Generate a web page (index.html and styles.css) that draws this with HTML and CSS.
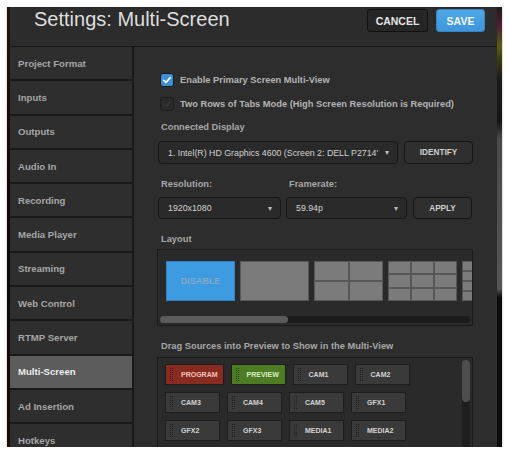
FILE: index.html
```html
<!DOCTYPE html>
<html lang="en">
<head>
    <meta charset="UTF-8">
    <meta name="viewport" content="width=device-width, initial-scale=1.0">
    <title>Settings: Multi-Screen</title>
    <link rel="stylesheet" href="styles.css">
</head>
<body>
    <div class="frame">
        <div class="edge edge-left"></div>
        <div class="app">
            <header class="top">
                <h1>Settings: Multi-Screen</h1>
                <div class="actions">
                    <button class="btn cancel">CANCEL</button>
                    <button class="btn save">SAVE</button>
                </div>
            </header>
            <div class="body">
                <ul class="menu">
                    <li>Project Format</li>
                    <li>Inputs</li>
                    <li>Outputs</li>
                    <li>Audio In</li>
                    <li>Recording</li>
                    <li>Media Player</li>
                    <li>Streaming</li>
                    <li>Web Control</li>
                    <li>RTMP Server</li>
                    <li class="active">Multi-Screen</li>
                    <li>Ad Insertion</li>
                    <li>Hotkeys</li>
                </ul>
                <main class="panel">
                    <div class="check-row first">
                        <span class="box on">
                            <svg width="14" height="14" viewBox="0 0 14 14"><path d="M3.2 7.4 L5.8 9.9 L10.8 4.2" fill="none" stroke="#fff" stroke-width="2" stroke-linecap="round" stroke-linejoin="round"/></svg>
                        </span>
                        <span class="check-label">Enable Primary Screen Multi-View</span>
                    </div>
                    <div class="check-row">
                        <span class="box">
                            <svg width="14" height="14" viewBox="0 0 14 14"><path d="M3.2 7.4 L5.8 9.9 L10.8 4.2" fill="none" stroke="#363636" stroke-width="2" stroke-linecap="round" stroke-linejoin="round"/></svg>
                        </span>
                        <span class="check-label">Two Rows of Tabs Mode (High Screen Resolution is Required)</span>
                    </div>

                    <div class="label display-label">Connected Display</div>
                    <div class="control-row">
                        <div class="select wide">
                            <span class="value">1. Intel(R) HD Graphics 4600 (Screen 2: DELL P2714'</span>
                            <span class="arrow">&#9662;</span>
                        </div>
                        <button class="btn small identify">IDENTIFY</button>
                    </div>

                    <div class="res-grid">
                        <div class="label">Resolution:</div>
                        <div class="label">Framerate:</div>
                        <div></div>
                        <div class="select">
                            <span class="value">1920x1080</span>
                            <span class="arrow">&#9662;</span>
                        </div>
                        <div class="select">
                            <span class="value">59.94p</span>
                            <span class="arrow">&#9662;</span>
                        </div>
                        <button class="btn small">APPLY</button>
                    </div>

                    <div class="label layout-label">Layout</div>
                    <div class="layout-box">
                        <div class="layouts">
                            <div class="lay disable">DISABLE</div>
                            <div class="lay g1"><i></i></div>
                            <div class="lay g2"><i></i><i></i><i></i><i></i></div>
                            <div class="lay g3"><i></i><i></i><i></i><i></i><i></i><i></i><i></i><i></i><i></i></div>
                            <div class="lay g4"><i></i><i></i><i></i><i></i><i></i><i></i><i></i><i></i><i></i><i></i><i></i><i></i><i></i><i></i><i></i><i></i></div>
                        </div>
                        <div class="hscroll"><div class="thumb"></div></div>
                    </div>

                    <div class="label drag-label">Drag Sources into Preview to Show in the Multi-View</div>
                    <div class="sources">
                        <div class="src-grid">
                            <div class="src-row">
                                <div class="src program"><span class="grip"></span>PROGRAM</div>
                                <div class="src preview"><span class="grip"></span>PREVIEW</div>
                                <div class="src"><span class="grip"></span>CAM1</div>
                                <div class="src"><span class="grip"></span>CAM2</div>
                            </div>
                            <div class="src-row">
                                <div class="src"><span class="grip"></span>CAM3</div>
                                <div class="src"><span class="grip"></span>CAM4</div>
                                <div class="src"><span class="grip"></span>CAM5</div>
                                <div class="src"><span class="grip"></span>GFX1</div>
                            </div>
                            <div class="src-row">
                                <div class="src"><span class="grip"></span>GFX2</div>
                                <div class="src"><span class="grip"></span>GFX3</div>
                                <div class="src"><span class="grip"></span>MEDIA1</div>
                                <div class="src"><span class="grip"></span>MEDIA2</div>
                            </div>
                        </div>
                        <div class="vscroll"><div class="thumb"></div></div>
                    </div>
                </main>
            </div>
        </div>
        <div class="edge edge-right"></div>
    </div>
</body>
</html>
```

FILE: styles.css
```css
*{
    margin: 0;
    padding: 0;
    box-sizing: border-box;
}
body{
    background-color: #ffffff;
    font-family: "Liberation Sans", Arial, sans-serif;
}
.frame{
    margin: 7px 0 0 7px;
    width: 495px;
    height: 440px;
    display: flex;
    overflow: hidden;
    background-color: #111111;
    box-shadow: 0 1px 2px rgba(0,0,0,0.35);
}
.edge-left{
    width: 3px;
    background: linear-gradient(#2a1010, #160707 40%, #0b0b0b 60%, #1a0c06);
}
.edge-right{
    width: 5px;
    background: linear-gradient(#241a1e 0, #4a1c30 4%, #5b5a14 9%, #3a3a10 12%, #1c1c1c 16%, #151515 26%, #4a4a4a 30%, #555555 64%, #0c0c0c 66%, #0c0c0c);
}
.app{
    flex: 1;
    min-width: 0;
    display: flex;
    flex-direction: column;
    background-color: #2c2c2c;
}

/* header */
.top{
    height: 40px;
    flex-shrink: 0;
    border-bottom: 1px solid #151515;
    display: flex;
    justify-content: space-between;
    align-items: flex-start;
    padding: 0 12px 0 24px;
}
.top h1{
    font-size: 20px;
    line-height: 24px;
    font-weight: normal;
    color: #dedede;
}
.actions{
    display: flex;
    gap: 8px;
    margin-top: 2px;
}
.btn{
    font-family: inherit;
    font-weight: bold;
    border-radius: 3px;
    cursor: pointer;
}
.cancel{
    width: 61px;
    height: 23px;
    font-size: 10.5px;
    color: #e4e4e4;
    background-color: #262626;
    border: 1px solid #111111;
}
.save{
    width: 49px;
    height: 23px;
    font-size: 10.5px;
    color: #f2f7fb;
    background: linear-gradient(#4ea7e6, #3c96d9);
    border: 1px solid #3584c0;
}

/* body */
.body{
    flex: 1;
    display: flex;
    min-height: 0;
}
.menu{
    list-style: none;
    width: 124px;
    flex-shrink: 0;
    display: flex;
    flex-direction: column;
    gap: 2px;
    background-color: #191919;
    border-right: 2px solid #191919;
}
.menu li{
    height: 32.3px;
    flex-shrink: 0;
    display: flex;
    align-items: center;
    padding-left: 8px;
    font-size: 9.6px;
    font-weight: bold;
    color: #a6a6a6;
    background-color: #2e2e2e;
}
.menu li.active{
    background-color: #5c5c5c;
    color: #ececec;
}

/* panel */
.panel{
    flex: 1;
    min-width: 0;
    padding: 26px 24px 0 24px;
    background-color: #2d2d2d;
}
.label{
    font-size: 9.3px;
    line-height: 14px;
    font-weight: bold;
    color: #a8a8a8;
    padding-left: 3px;
}
.check-row{
    display: flex;
    align-items: center;
    height: 14px;
    margin-top: 10px;
    padding-left: 2px;
    gap: 6px;
}
.check-row.first{
    margin-top: 0;
}
.box{
    width: 14px;
    height: 14px;
    border-radius: 3px;
    background-color: #2a2a2a;
    border: 1px solid #1d1d1d;
    display: flex;
    align-items: center;
    justify-content: center;
}
.box svg{
    display: block;
}
.box.on{
    background-color: #3a8fd6;
    border-color: #1a1a1a;
}
.check-label{
    font-size: 9.3px;
    font-weight: bold;
    color: #b4b4b4;
}
.display-label{
    margin-top: 9px;
}
.control-row{
    display: flex;
    gap: 6px;
    margin-top: 7px;
    height: 23px;
}
.select{
    display: flex;
    align-items: center;
    justify-content: space-between;
    height: 100%;
    padding: 0 8px 0 9px;
    background-color: #2a2a2a;
    border: 1px solid #161616;
    border-radius: 4px;
    font-size: 8.8px;
    color: #d2d2d2;
}
.select.wide{
    width: 240px;
}
.select .value{
    white-space: nowrap;
}
.select .arrow{
    font-size: 8px;
    color: #bdbdbd;
}
.small{
    height: 100%;
    font-size: 8.2px;
    color: #d0d0d0;
    background-color: #2f2f2f;
    border: 1px solid #161616;
    border-radius: 4px;
}
.identify{
    width: 69px;
}
.res-grid{
    display: grid;
    grid-template-columns: 123px 121px 60px;
    grid-template-rows: 14px 22px;
    column-gap: 5px;
    row-gap: 6px;
    margin-top: 13px;
}
.res-grid .btn{
    margin-left: 1px;
}
.layout-label{
    margin-top: 13px;
}

/* layout chooser */
.layout-box{
    margin: 3px 0 0 -1px;
    width: 316px;
    height: 77px;
    border: 1px solid #1b1b1b;
    background-color: #2a2a2a;
    padding-top: 11px;
}
.layouts{
    display: flex;
    gap: 5px;
    height: 40px;
    padding-left: 8px;
    overflow: hidden;
}
.lay{
    width: 69px;
    height: 40px;
    flex-shrink: 0;
    display: grid;
    gap: 2px;
    padding: 1px;
    background-color: #575757;
}
.lay i{
    background-color: #7b7b7b;
}
.lay.disable{
    display: flex;
    align-items: center;
    justify-content: center;
    background-color: #3d9be1;
    border: 1px solid #2f82c4;
    font-size: 9px;
    font-weight: bold;
    color: #86a9c6;
}
.g2{
    grid-template-columns: 1fr 1fr;
}
.g3{
    grid-template-columns: repeat(3, 1fr);
}
.g4{
    grid-template-columns: repeat(4, 1fr);
}
.hscroll{
    margin: 15px 2px 0 2px;
    height: 7px;
    border-radius: 4px;
    background-color: #1c1c1c;
}
.hscroll .thumb{
    width: 128px;
    height: 100%;
    border-radius: 4px;
    background-color: #5b5b5b;
}
.drag-label{
    margin-top: 13px;
}

/* sources */
.sources{
    margin: 4px 0 0 -1px;
    width: 316px;
    height: 110px;
    border: 1px solid #1b1b1b;
    background-color: #2a2a2a;
    display: flex;
}
.src-grid{
    flex: 1;
    display: flex;
    flex-direction: column;
    gap: 7px;
    padding: 6px 0 0 7px;
}
.src-row{
    display: flex;
    gap: 7px;
}
.src{
    min-width: 55px;
    height: 21px;
    display: flex;
    align-items: center;
    padding-right: 5px;
    background-color: #3a3a3a;
    border: 1px solid #1e1e1e;
    font-size: 7px;
    font-weight: bold;
    color: #d4d4d4;
}
.grip{
    width: 4px;
    height: 14px;
    margin: 0 7px 0 4px;
    background-image: radial-gradient(circle at 0.5px 0.5px, rgba(0,0,0,0.45) 0.7px, transparent 0.9px);
    background-size: 2px 2px;
}
.src.program{
    background-color: #8a2b22;
    color: #f1c6bf;
}
.src.preview{
    background-color: #4d7c23;
    color: #dcefc9;
}
.vscroll{
    width: 8px;
    margin: 2px 2px 0 0;
    border-radius: 4px;
    background-color: #1e1e1e;
}
.vscroll .thumb{
    height: 42px;
    border-radius: 4px;
    background-color: #4e4e4e;
}
```
